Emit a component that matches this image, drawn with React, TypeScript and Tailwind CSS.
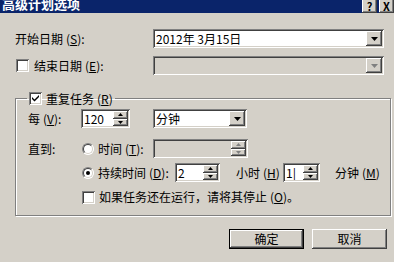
import React from "react";

const sunken =
  "shadow-[inset_1px_1px_0_#808080,inset_-1px_-1px_0_#ffffff,inset_2px_2px_0_#404040,inset_-2px_-2px_0_#d4d0c8]";
const raised =
  "shadow-[inset_-1px_-1px_0_#404040,inset_1px_1px_0_#ffffff,inset_-2px_-2px_0_#808080,inset_2px_2px_0_#d4d0c8]";

const Key = ({ k }: { k: string }) => (
  <span className="ml-[3px]">
    (<span className="underline">{k}</span>)
  </span>
);

const DownArrow = ({ grey }: { grey?: boolean }) => (
  <svg width="7" height="4" viewBox="0 0 7 4">
    <path d="M0 0h7L3.5 4z" fill={grey ? "#808080" : "#000"} />
  </svg>
);

const Combo = ({ w, value, disabled }: { w: string; value?: string; disabled?: boolean }) => (
  <div className={`${w} h-[19px] flex items-center p-[2px] ${sunken} ${disabled ? "bg-[#d4d0c8]" : "bg-white"}`}>
    <div className="flex-1 pl-[1px] leading-[15px] whitespace-nowrap overflow-hidden">{value}</div>
    <div className={`w-[16px] h-[15px] bg-[#d4d0c8] flex items-center justify-center ${raised}`}>
      <DownArrow grey={disabled} />
    </div>
  </div>
);

const Spin = ({ w, value, disabled }: { w: string; value?: string; disabled?: boolean }) => (
  <div className={`${w} h-[19px] flex items-stretch p-[2px] ${sunken} ${disabled ? "bg-[#d4d0c8]" : "bg-white"}`}>
    <div className="flex-1 pl-[1px] leading-[15px] whitespace-nowrap overflow-hidden">{value}</div>
    <div className="w-[15px] flex flex-col">
      <div className={`flex-1 bg-[#d4d0c8] flex items-center justify-center ${raised}`}>
        <svg width="5" height="3" viewBox="0 0 5 3">
          <path d="M0 3h5L2.5 0z" fill={disabled ? "#808080" : "#000"} />
        </svg>
      </div>
      <div className={`flex-1 bg-[#d4d0c8] flex items-center justify-center ${raised}`}>
        <svg width="5" height="3" viewBox="0 0 5 3">
          <path d="M0 0h5L2.5 3z" fill={disabled ? "#808080" : "#000"} />
        </svg>
      </div>
    </div>
  </div>
);

const Check = ({ on }: { on?: boolean }) => (
  <div className={`w-[13px] h-[13px] bg-white shrink-0 flex items-center justify-center ${sunken}`}>
    {on && (
      <svg width="7" height="7" viewBox="0 0 7 7">
        <path d="M0 2l2.5 2.5L7 0v2L2.5 6.5 0 4z" fill="#000" />
      </svg>
    )}
  </div>
);

const Radio = ({ on }: { on?: boolean }) => (
  <div className="w-[12px] h-[12px] rounded-full bg-white shrink-0 flex items-center justify-center border border-[#808080] border-r-white border-b-white">
    <div className="w-[10px] h-[10px] rounded-full flex items-center justify-center border border-[#404040] border-r-[#d4d0c8] border-b-[#d4d0c8]">
      {on && <div className="w-[4px] h-[4px] rounded-full bg-black" />}
    </div>
  </div>
);

export default function App() {
  return (
    <div className="w-[394px] h-[262px] bg-[#d4d0c8] overflow-hidden text-[12px] text-black font-['Noto_Sans_CJK_SC',sans-serif] leading-none">
      <div className="h-[13px] bg-[#0a246a] flex justify-between overflow-hidden">
        <div className="text-white font-bold text-[13px] leading-[13px] -mt-[3px] pl-[2px]">高级计划选项</div>
        <div className="flex gap-[2px] items-end -mt-[3px]">
          <div className={`w-[15px] h-[14px] bg-[#d4d0c8] flex items-center justify-center font-bold text-[11px] ${raised}`}>?</div>
          <div className={`w-[15px] h-[14px] bg-[#d4d0c8] flex items-center justify-center font-bold text-[11px] ${raised}`}>X</div>
        </div>
      </div>

      <div className="flex items-center mt-[16px] pl-[15px] h-[19px]">
        <div className="w-[138px]">
          开始日期<Key k="S" />:
        </div>
        <Combo w="w-[231px]" value="2012年  3月15日" />
      </div>

      <div className="flex items-center mt-[8px] pl-[16px] h-[19px]">
        <div className="w-[137px] flex items-center gap-[5px]">
          <Check />
          <span>
            结束日期<Key k="E" />:
          </span>
        </div>
        <Combo w="w-[231px]" disabled />
      </div>

      <fieldset className="ml-[15px] mt-[17px] w-[376px] h-[124px] border border-[#808080] shadow-[1px_1px_0_#ffffff,inset_1px_1px_0_#ffffff] pl-[12px]">
        <legend className="ml-[-1px] px-[2px] flex items-center gap-[4px] h-[13px]">
          <Check on />
          <span>
            重复任务<Key k="R" />
          </span>
        </legend>

        <div className="flex items-center mt-[4px] h-[19px]">
          <div className="w-[53px]">
            每<Key k="V" />:
          </div>
          <Spin w="w-[49px]" value="120" />
          <div className="w-[23px]" />
          <Combo w="w-[94px]" value="分钟" />
        </div>

        <div className="flex items-center mt-[11px] h-[19px]">
          <div className="w-[54px]">直到:</div>
          <div className="w-[71px] flex items-center gap-[4px]">
            <Radio />
            <span>
              时间<Key k="T" />:
            </span>
          </div>
          <Spin w="w-[95px]" disabled />
        </div>

        <div className="flex items-center mt-[5px] h-[19px] pl-[54px]">
          <div className="w-[93px] flex items-center gap-[4px]">
            <Radio on />
            <span>
              持续时间<Key k="D" />:
            </span>
          </div>
          <Spin w="w-[45px]" value="2" />
          <div className="w-[63px] pl-[16px]">
            小时<Key k="H" />
          </div>
          <Spin w="w-[37px]" value="1|" />
          <div className="pl-[15px]">
            分钟<Key k="M" />
          </div>
        </div>

        <div className="flex items-center mt-[8px] h-[14px] pl-[54px] gap-[4px]">
          <Check />
          <span>
            如果任务还在运行，请将其停止<Key k="O" />。
          </span>
        </div>
      </fieldset>

      <div className="flex justify-end gap-[8px] pr-[7px] mt-[13px]">
        <div className="w-[75px] h-[20px] border border-black">
          <div className={`w-full h-full flex items-center justify-center ${raised}`}>确定</div>
        </div>
        <div className={`w-[75px] h-[20px] flex items-center justify-center ${raised}`}>取消</div>
      </div>
    </div>
  );
}
